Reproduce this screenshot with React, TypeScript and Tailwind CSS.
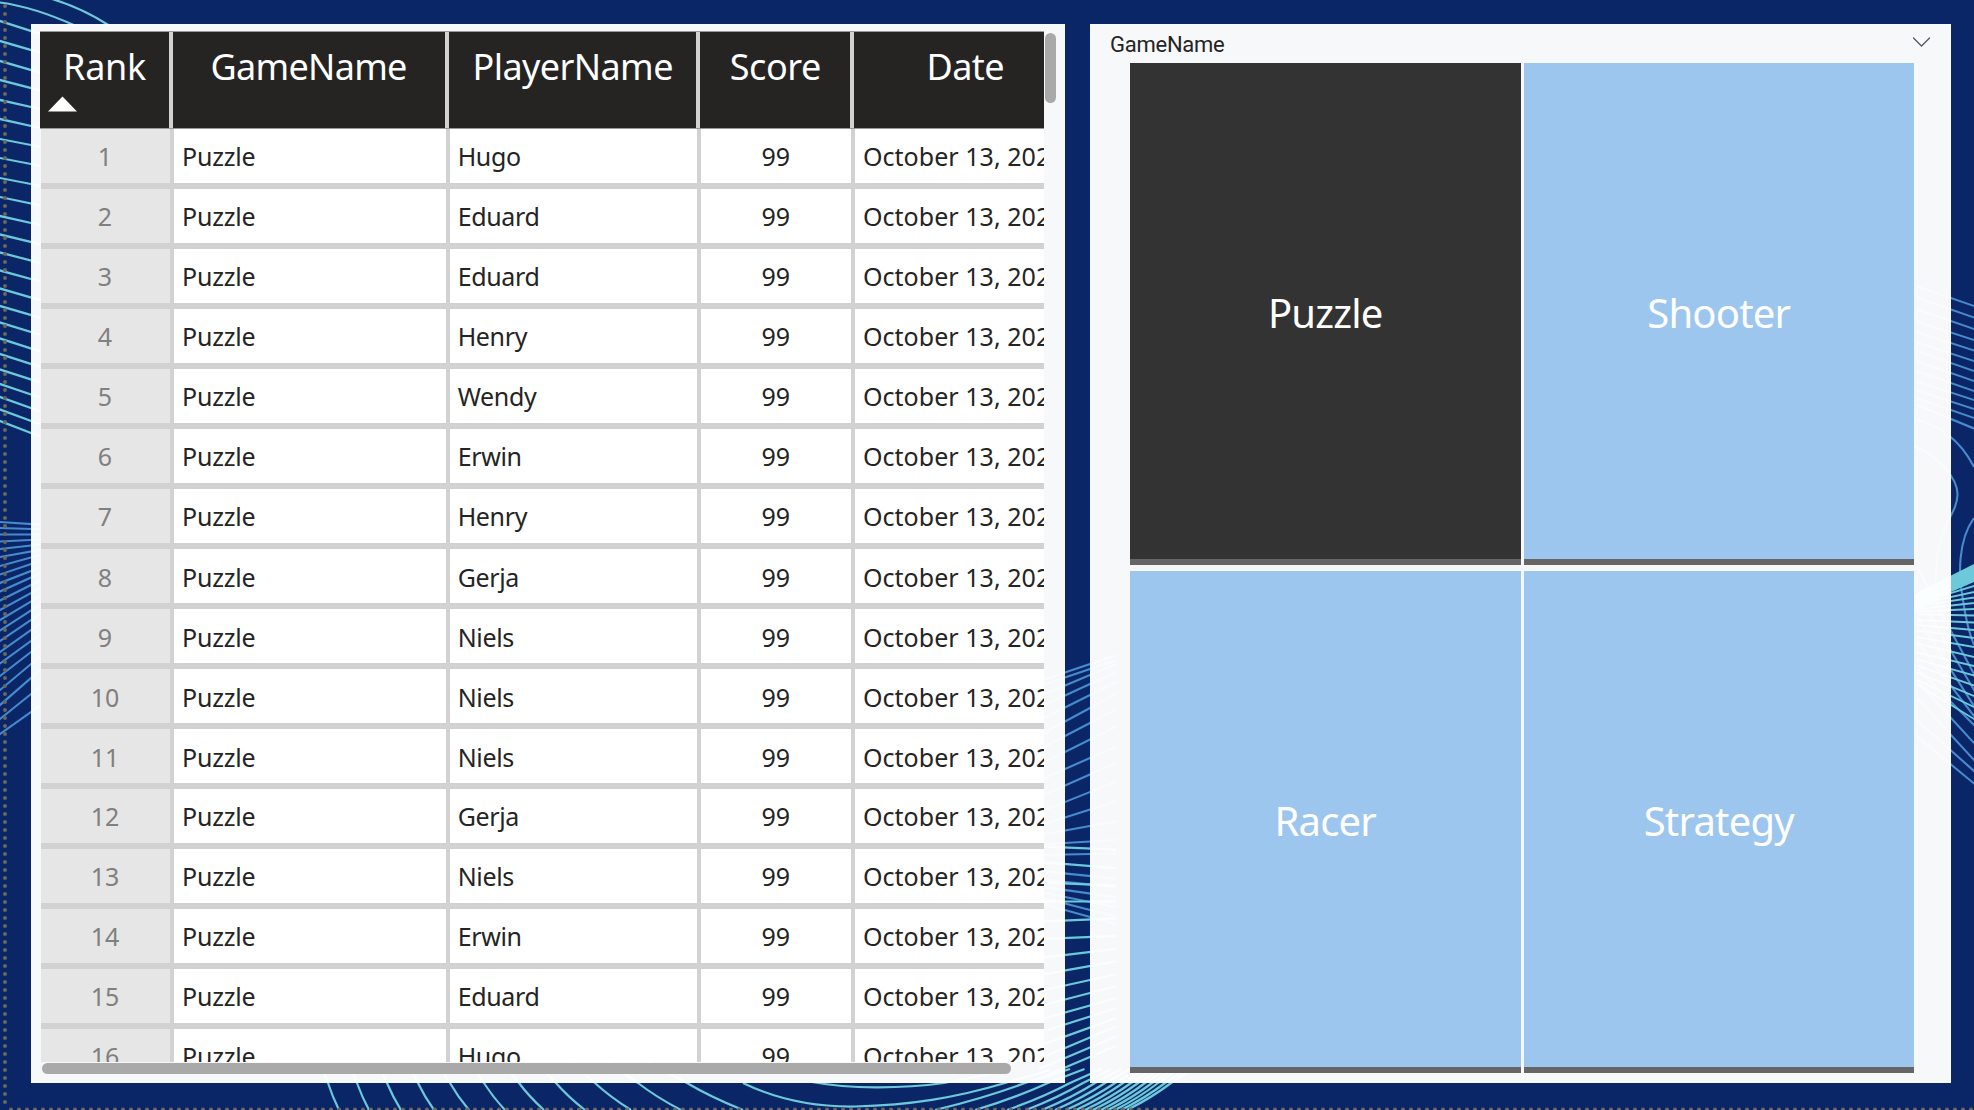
const CYAN = '#6bc9da';
const BLUE = '#458bcd';

/** Straight segments crossing a vertical strip, extended on both sides. */
function across(x0: number, x1: number, left: number[], right: number[], pad: number) {
  return left
    .map((y, i) => {
      const slope = (right[i] - y) / (x1 - x0);
      return `M${x0 - pad} ${y - slope * pad}L${x1 + pad} ${right[i] + slope * pad}`;
    })
    .join('');
}

const leftCyan = across(
  0, 31,
  [21, 41, 61, 80, 100, 119, 139, 158, 178, 197, 216, 234.5, 252.5, 270.5, 288.5, 306, 322.5, 338.5, 354, 369.5, 384, 397, 409.5, 421],
  [31, 50, 70, 88, 107, 126, 145, 164, 184, 203.5, 223, 242, 260.5, 279, 297.5, 315, 332, 348.5, 364, 379.5, 394.5, 408, 421, 433],
  9,
);
const leftBlue = across(
  0, 31,
  [522, 528, 534.5, 541.5, 549, 557, 566, 574.5, 583, 591.5, 600.5, 610, 620, 630.5, 641, 652, 663.5, 676, 690, 705, 719, 734],
  [524, 529, 534.5, 540, 545.5, 551.5, 557.5, 564, 571, 577.5, 585, 593, 601.5, 610.5, 620, 630, 641, 652, 664, 678, 694, 712],
  9,
);
const gapBlue = across(
  1065, 1090,
  [672.5, 677.5, 685.5, 695.5, 707.5, 721.5, 736, 752, 769, 785.5, 802, 817.5, 830.5, 843, 854.5, 873.5, 882, 890, 897, 903.5, 910],
  [664, 669, 675, 684, 695, 708, 723, 739.5, 758, 774.5, 792, 809.5, 826, 841.5, 854, 876, 884.5, 893.5, 902, 910, 917],
  26,
);
const gapCyan = across(
  1065, 1090,
  [847.5, 864, 883.5, 901.5, 920.5, 938, 955, 970.5, 985.5, 999.5, 1012.5, 1024.5, 1036.5, 1048, 1058, 1067.5],
  [848.5, 866, 884.5, 901.5, 919.5, 937, 952, 966, 980, 993, 1005.5, 1016.5, 1027.5, 1037.5, 1047.5, 1057],
  26,
);
const rightBlue = across(
  1951, 1974,
  [298, 309.5, 321, 332.5, 343, 353.5, 363, 373, 383, 392.5, 401.5, 410, 419],
  [306, 317.5, 329, 340, 350.5, 361, 371, 381, 391, 400, 409, 418, 428.5],
  34,
);
const rightCyan = across(
  1951, 1974,
  [593, 597, 601, 605.5, 610, 615, 621.5, 628, 635, 643, 651.5, 660.5, 669, 677.5, 686.5, 696, 705],
  [586, 592, 597.5, 603, 609, 615.5, 622.5, 630, 638, 647, 657, 666, 675.5, 685.5, 696, 707, 719],
  34,
);
const rightCross = across(
  1951, 1974,
  [631, 651, 670, 686, 702, 718, 735, 750.5, 764.5],
  [674, 690, 706, 716, 725, 743, 760, 771, 783.5],
  34,
);

const bottomLeft: [number, number][] = [
  [328, 339], [357, 369], [387, 401], [418, 434], [450, 469], [484, 505],
  [519, 544], [556, 585], [595, 631], [638, 681], [687, 743],
];
const bottomRight: [number, number][] = [
  [1025, 935], [1048, 975], [1070, 1007], [1083, 1026], [1095, 1042], [1105, 1055],
  [1115, 1066], [1123, 1076], [1131, 1085], [1138, 1093], [1145, 1101], [1152, 1108],
  [1158, 1115], [1165, 1121], [1171, 1127],
];
const fromLeft = bottomLeft
  .map(([t, b]) => `M${t - (b - t) * 0.7} 1062L${t} 1083Q${t + (b - t) * 0.42} 1097 ${b} 1110`)
  .join('');
const fromRight = bottomRight
  .map(([t, b]) => `M${t + (t - b) * 0.5} 1069L${t} 1083Q${t - (t - b) * 0.45} 1098 ${b} 1110`)
  .join('');

function Waves() {
  return (
    <svg className="absolute inset-0" width="1974" height="1110" viewBox="0 0 1974 1110" fill="none">
      <g stroke={BLUE} strokeWidth="2.1">
        <path d={leftBlue} />
        <path d={gapBlue} />
        <path d={rightBlue} />
        <path d={rightCross} />
        <path d="M1914 419Q1954 428 1974 467" />
        <path d="M1914 446C1938 456 1958 478 1957.500 495C1956 520 1936 520 1936 582" />
        <path d="M1974 518C1958 540 1958 575 1963 600Q1967 628 1974 645" />
      </g>
      <g stroke={CYAN} strokeWidth="2.2">
        <path d="M0 2.500Q34 7 76 26" />
        <path d="M52 -1Q82 8 110 26" />
        <path d={leftCyan} />
        <path d={gapCyan} />
        <path d={fromLeft} />
        <path d={fromRight} />
        <path d="M743 1083C780 1101 820 1107 855 1106.500C910 1105 955 1098 1005 1083L1050 1070" />
        <path d="M812 1082C850 1089 900 1089 944 1083L1000 1072" />
      </g>
      <path d={rightCyan} stroke={CYAN} strokeWidth="1.9" />
      <path d="M1914 594L1951 575.500L1974 564V582L1951 592L1914 612Z" fill={CYAN} />
      <path d="M5 6V1110" stroke="#6b665f" strokeWidth="4" strokeLinecap="round" strokeDasharray="0 8" />
      <path d="M11 1109.500H1974" stroke="#6b665f" strokeWidth="4" strokeLinecap="round" strokeDasharray="0 8" />
    </svg>
  );
}

const players = [
  'Hugo', 'Eduard', 'Eduard', 'Henry', 'Wendy', 'Erwin', 'Henry', 'Gerja',
  'Niels', 'Niels', 'Niels', 'Gerja', 'Niels', 'Erwin', 'Eduard', 'Hugo',
];

const columns = 'grid grid-cols-[129px_272px_247px_150px_400px] gap-x-[4.1px]';

function ScoreTable() {
  return (
    <section className="relative h-[1059px] w-[1034px] bg-white/[0.97]">
      <div className="ml-[9px] h-[1038px] w-[1004px] overflow-hidden pt-[7px]">
        <div className={`${columns} h-[98px] w-[1220px] border-y border-[#9a9a9a] bg-[#d2d2d2] text-[36px] leading-[49px] text-white`}>
          <div className="relative bg-[#252423] pt-[10px] text-center tracking-[-0.3px]">
            Rank
            <svg className="absolute left-[8px] top-[64px]" width="29" height="16" viewBox="0 0 29 16">
              <path d="M14.500 0.500L29 15.500H0Z" fill="#fff" />
            </svg>
          </div>
          <div className="bg-[#252423] pr-[1px] pt-[10px] text-center tracking-[-0.7px]">GameName</div>
          <div className="bg-[#252423] pt-[10px] text-center tracking-[-0.6px]">PlayerName</div>
          <div className="bg-[#252423] pt-[10px] text-center tracking-[-0.4px]">Score</div>
          <div className="bg-[#252423] pl-[72px] pt-[10px] tracking-[-0.5px]">Date</div>
        </div>
        <div className="ml-[1px] w-[1220px] bg-[#d2d2d2] text-[25px] leading-[54px] text-[#252423]">
          {players.map((player, i) => (
            <div key={i} className={`${columns} h-[60px] pb-[6px] ${i >= 7 && i <= 10 ? 'leading-[56px]' : ''}`}>
              <div className="h-[54px] bg-[#e6e6e6] pr-[1px] text-center text-[#808080]">{i + 1}</div>
              <div className="h-[54px] bg-white pl-[8px] tracking-[-0.2px]">Puzzle</div>
              <div className="h-[54px] bg-white pl-[7.500px] tracking-[-0.35px]">{player}</div>
              <div className="h-[54px] bg-white pr-[1px] text-center">99</div>
              <div className="h-[54px] whitespace-nowrap bg-white pl-[7.500px] tracking-[0.05px]">October 13, 2022</div>
            </div>
          ))}
        </div>
      </div>
      <div className="absolute left-[1014px] top-[9px] h-[70px] w-[11px] rounded-full bg-[#a9a9a9]" />
      <div className="absolute left-[11px] top-[1039px] h-[11px] w-[969px] rounded-full bg-[#a9a9a9]" />
    </section>
  );
}

const tiles = [
  { name: 'Puzzle', style: 'bg-[#333333]' },
  { name: 'Shooter', style: 'bg-[#9dc6ef]' },
  { name: 'Racer', style: 'bg-[#9dc6ef]' },
  { name: 'Strategy', style: 'bg-[#9dc6ef]' },
];

function GameSlicer() {
  return (
    <section className="h-[1059px] w-[861px] bg-white/[0.97]">
      <header className="flex h-[39px] items-center justify-between pl-[20px] pr-[21px] text-[#252423]">
        <h2 className="pt-[2px] font-[Roboto] text-[22px] tracking-[-0.25px]">GameName</h2>
        <svg className="-mt-[3px]" width="17" height="10" viewBox="0 0 17 10" fill="none">
          <path d="M0 0.500L8.500 9L17 0.500" stroke="#555b66" strokeWidth="1.3" />
        </svg>
      </header>
      <div className="ml-[40px] grid w-[784px] grid-cols-2 gap-x-[3px] gap-y-[6px]">
        {tiles.map((tile) => (
          <div
            key={tile.name}
            className={`flex h-[502px] items-center justify-center border-b-[6px] border-[#666666] pt-[3px] text-[40px] tracking-[-0.8px] text-white ${tile.style}`}
          >
            {tile.name}
          </div>
        ))}
      </div>
    </section>
  );
}

export default function App() {
  return (
    <main className="relative h-[1110px] w-[1974px] overflow-hidden bg-[#0b2667] font-['Noto_Sans',sans-serif]">
      <Waves />
      <div className="relative flex gap-[25px] pl-[31px] pt-[24px]">
        <ScoreTable />
        <GameSlicer />
      </div>
    </main>
  );
}
